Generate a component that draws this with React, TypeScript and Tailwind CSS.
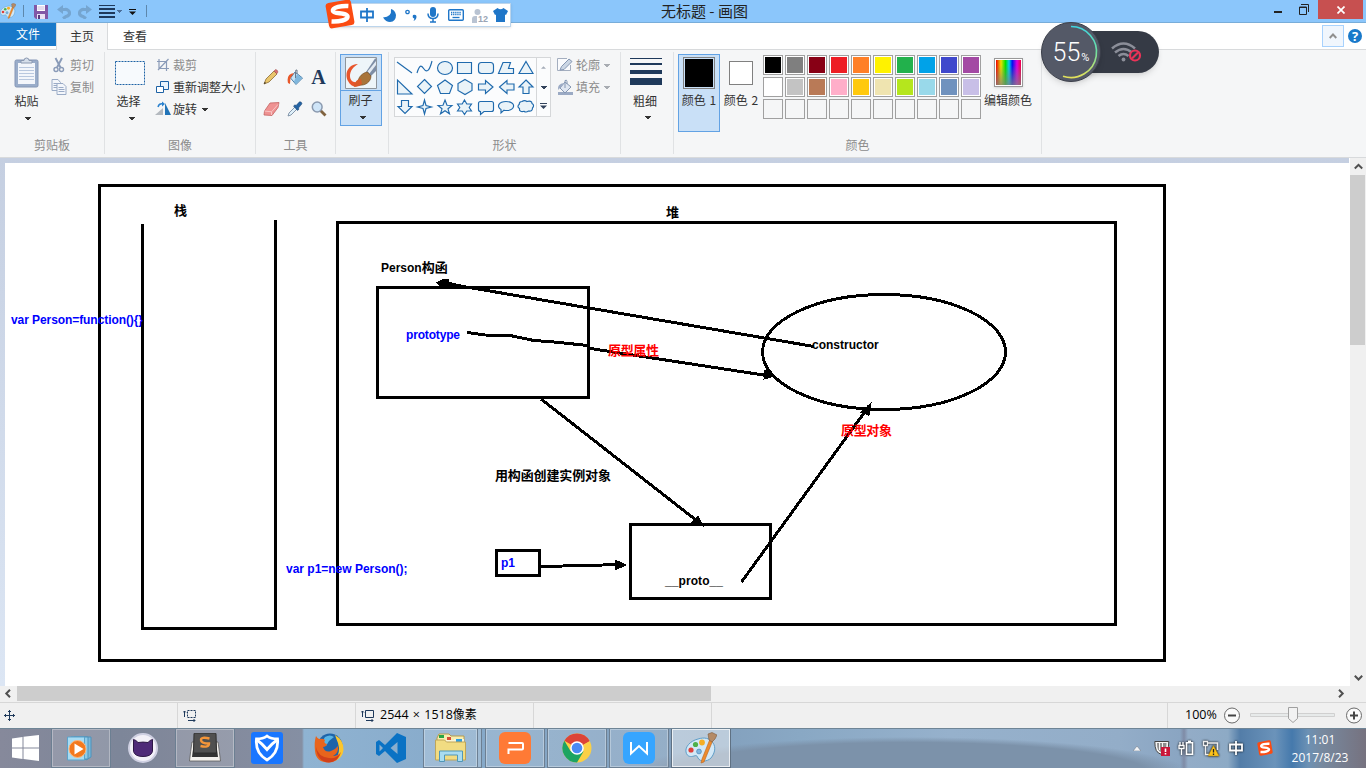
import React from "react";

type Kids = { children?: React.ReactNode; className?: string };

const INK = "#1f6aad";
const NAVY = "#1e395b";

function Caret({ className = "text-black", w = 6 }: { className?: string; w?: number }) {
  return (
    <svg width={w} height="3" viewBox="0 0 6 3" className={"shrink-0 " + className}>
      <path d="M0 0h6v1H5v1H4v1H2V2H1V1H0z" fill="currentColor" shapeRendering="crispEdges" />
    </svg>
  );
}

function Group({ children, label = "", className = "" }: Kids & { label?: string }) {
  return (
    <div className={"flex h-[107px] shrink-0 flex-col " + className}>
      <div className="flex h-[107px]">
        <div className="flex min-w-0 grow flex-col">
          <div className="flex h-[87px] items-start">{children}</div>
          <div className="h-4 text-center leading-4 text-[#8c8c8c]">{label}</div>
        </div>
        <div className="mt-[2px] h-[102px] w-px bg-[#e0e2e4]" />
      </div>
    </div>
  );
}

function Row({ children, className = "" }: Kids) {
  return <div className={"flex h-[22px] items-center gap-[2px] whitespace-nowrap " + className}>{children}</div>;
}

function PaintIcon({ size }: { size: number }) {
  return (
    <svg width={size} height={size} viewBox="0 0 32 32">
      <path d="M13 7C5 9 0 15 1 20c1 5 5 5 8 4 3-1 3 0 4 2 2 4 9 4 13 0 4-5 5-11 2-15-3-5-9-6-15-4z" fill="#d3e8f6" stroke="#5f9ec8" strokeWidth="1" />
      <circle cx="6" cy="18" r="2.600" fill="#e0403a" />
      <circle cx="10.500" cy="12.500" r="2.600" fill="#4fb04a" />
      <circle cx="17" cy="10.500" r="2.900" fill="#f5ae24" />
      <circle cx="14" cy="19.500" r="2.400" fill="#7fb5df" stroke="#4b87b8" strokeWidth=".7" />
      <path d="M25 7l3 1-9 22-3 1 1-4z" fill="#ee8b2c" stroke="#b8651e" strokeWidth=".6" />
      <path d="M23 2l4-1.500L32 3l-2 4-3 3-3-2z" fill="#b48a66" stroke="#7d5a3c" strokeWidth=".6" />
    </svg>
  );
}

function TitleBar() {
  return (
    <header className="flex h-[23px] items-start border-b border-[#78add9] bg-[#8bc6fb]">
      <div className="flex h-[22px] w-[655px] items-center">
        <div className="w-[16px]"><PaintIcon size={16} /></div>
        <div className="ml-[7px] h-3 w-px bg-[#5d87ac]" />
        <svg className="ml-[10px] mt-[2px]" width="14" height="14" viewBox="0 0 14 14">
          <path d="M0 0h14v14H2l-2-2z" fill="#8157a6" />
          <path d="M3 0h8v6H3z" fill="#fff" /><path d="M3.500 2h7M3.500 4h7" stroke="#c9b8dc" />
          <path d="M3 9h8v5H3z" fill="#e9e0f2" /><path d="M4 10h2v4H4z" fill="#5a3a80" />
        </svg>
        <svg className="ml-[9px] mt-[2px]" width="14" height="14" viewBox="0 0 14 14" fill="none" stroke="#75a5d0">
          <path d="M3 4.500h5a4 3.500 0 0 1 1 7l-3 2" strokeWidth="3.200" /><path d="M0 4.500l6-4.500v9z" fill="#75a5d0" stroke="none" />
        </svg>
        <svg className="ml-[7px] mt-[2px]" width="14" height="14" viewBox="0 0 14 14" fill="none" stroke="#75a5d0">
          <path d="M11 4.500H6a4 3.500 0 0 0-1 7l3 2" strokeWidth="3.200" /><path d="M14 4.500L8 0v9z" fill="#75a5d0" stroke="none" />
        </svg>
        <svg className="ml-[7px]" width="16" height="13" viewBox="0 0 16 13" fill={NAVY}>
          <path d="M0 0h16v1H0zM0 3h16v2H0zM0 7h16v2H0zM0 11h16v2H0z" />
        </svg>
        <Caret className="ml-[2px] text-[#4b6f9a]" w={5} />
        <svg className="ml-[7px] mt-[2px]" width="7" height="6" viewBox="0 0 7 6"><path d="M0 0h7v1H0zM0 2.500h7L3.500 6z" fill="#111" /></svg>
        <div className="ml-[10px] h-3 w-px bg-[#5d87ac]" />
      </div>
      <div className="w-[102px] pl-[6px] text-[15px] leading-[22px] whitespace-nowrap text-[#222]">无标题&nbsp;- 画图</div>
      <div className="ml-auto flex h-[19px] w-[44px]">
        <div className="flex w-[25px] items-end pb-[6px]"><div className="h-[2px] w-2 bg-[#222]" /></div>
        <svg className="mt-1 h-[11px] w-[10px]" viewBox="0 0 10 11" fill="none" stroke="#222"><path d="M2 .5h7.500V8" /><path d="M.5 3h7v7.500h-7z" /><path d="M0 3.500h8" /></svg>
      </div>
      <div className="mr-[3px] flex h-[19px] w-[45px] items-center justify-center bg-[#c75050]">
        <svg width="8" height="8" viewBox="0 0 8 8"><path d="M.5.5l7 7M7.500.5l-7 7" stroke="#fff" strokeWidth="1.700" /></svg>
      </div>
    </header>
  );
}

function TabBar() {
  return (
    <nav className="flex h-[27px] bg-white text-[#333]">
      <div className="w-14 border-b border-[#d8dadc]">
        <div className="h-[23px] bg-[#1979ca] text-center leading-[22px] text-white">文件</div>
      </div>
      <div className="w-[52px] border-x border-[#d8dadc] bg-[#f5f6f7] text-center leading-[26px]">主页</div>
      <div className="flex grow items-start border-b border-[#d8dadc] pl-[15px]">
        <span className="leading-[26px]">查看</span>
        <div className="mt-[2px] mr-[4px] ml-auto flex h-[22px] w-[22px] items-center justify-center border border-[#a8d2fd] bg-[#f0f6fd]">
          <svg width="8" height="6" viewBox="0 0 8 6"><path d="M.7 5L4 1.500 7.300 5" fill="none" stroke="#8f8f8f" strokeWidth="1.900" /></svg>
        </div>
        <div className="mt-[6px] mr-[4px] flex h-[14px] w-[14px] items-center justify-center rounded-full bg-[#1979ca] font-['Open_Sans',sans-serif] text-[13px] leading-[14px] font-bold text-white">?</div>
      </div>
    </nav>
  );
}

const shapes: React.ReactNode[] = [
  <path d="M3 4l15 11" />,
  <path d="M3 15c3-10 5-7 7-4s5 4 8-8" />,
  <ellipse cx="11" cy="10" rx="7.500" ry="6.500" />,
  <path d="M3.500 4.500h14v11h-14z" />,
  <rect x="3.500" y="4.500" width="15" height="11" rx="3" />,
  <path d="M8 4.500h7.500l-2 6h5v5H3.500z" />,
  <path d="M11 3.500l7 12H4z" />,
  <path d="M3.500 3v14H18z" />,
  <path d="M10.500 2.500l7 7-7 7-7-7z" />,
  <path d="M11 3l7.500 5.500-3 8h-9l-3-8z" />,
  <path d="M11 2.500l7 4v7l-7 4-7-4v-7z" />,
  <path d="M3.500 7h7V3.500l7.500 6.500-7.500 6.500V13h-7z" />,
  <path d="M19 7h-7V3.500L4.500 10l7.500 6.500V13h7z" />,
  <path d="M11 3l7 7h-4v6.500H8V10H4z" />,
  <path d="M7.500 3.500h7v6H18l-7 7-7-7h3.500z" />,
  <path d="M10.500 3l1.500 5.500 5.500 1.500-5.500 1.500-1.500 5.500L9 11.500 3.500 10 9 8.500z" />,
  <path d="M11 3l2 5.200 5 .2-4 3.400 1.500 5-4.500-3-4.500 3 1.500-5-4-3.400 5-.2z" />,
  <path d="M10.500 3l2.300 4h4.700l-2.300 3.500 2.300 3.500h-4.700l-2.300 3.500L8.200 14H3.500l2.300-3.500L3.500 7h4.700z" />,
  <path d="M5.500 4.500h11q2 0 2 2v6q0 2-2 2H9l-3.500 3v-3q-2 0-2-2v-6q0-2 2-2z" />,
  <path d="M11 4.500c11 0 9 9 1 9-1 0-2 0-3-.3L6 16v-3.500C1 9.500 4 4.500 11 4.500z" />,
  <path d="M7 4.500c2-1.500 3-1.500 5 0 3-1 5 0 5 2 2 1 2 3 .5 4.500 0 3-2 3.500-4 3-2 1.500-3 1.500-4.500.3-3 1-5-.5-4.500-2.800-2-1-2-3-.2-4.200-.3-1.800 1-2.800 2.700-2.800z" />,
];

function ShapeGallery() {
  return (
    <div className="mt-[7px] ml-[5px] flex h-[60px] w-[157px] border border-[#d5d7d9] bg-[#fbfcfd]">
      <div className="grid w-[141px] grid-cols-7 grid-rows-3">
        {shapes.map((s, i) => (
          <svg key={i} viewBox="1 0 20 20" className="h-[20px] w-[20px]" fill="#eaf3f8" stroke={INK} strokeWidth="1.15">
            {i < 2 ? <g fill="none">{s}</g> : s}
          </svg>
        ))}
      </div>
      <div className="flex grow flex-col items-center border-l border-[#d5d7d9]">
        <svg className="mt-2" width="5" height="3" viewBox="0 0 6 3"><path d="M0 3h6L3 0z" fill="#a5adb8" /></svg>
        <Caret className="mt-[17px] text-[#33435c]" />
        <svg className="mt-[14px]" width="7" height="6" viewBox="0 0 7 6"><path d="M0 0h7v1H0zM0 2.500h7L3.500 6z" fill="#33435c" /></svg>
      </div>
    </div>
  );
}

const palette: string[] = [
  "#000000", "#7f7f7f", "#880015", "#ed1c24", "#ff7f27", "#fff200", "#22b14c", "#00a2e8", "#3f48cc", "#a349a4",
  "#ffffff", "#c3c3c3", "#b97a57", "#ffaec9", "#ffc90e", "#efe4b0", "#b5e61d", "#99d9ea", "#7092be", "#c8bfe7",
];

function Ribbon() {
  return (
    <section className="flex h-[108px] border-b border-[#d8dadc] bg-[#f5f6f7] text-[#333]">
      <Group label="剪贴板" className="w-[105px]">
        <div className="flex w-[50px] shrink-0 flex-col items-center pt-[7px] pl-[3px]">
          <svg width="25" height="31" viewBox="0 0 25 31">
            <rect x="1" y="3" width="23" height="27" rx="1.500" fill="#9aadca" stroke="#8496b6" />
            <path d="M4 6h17v21H4z" fill="#f3f6fb" />
            <path d="M5 10.500h15M5 13.500h15M5 16.500h15M5 19.500h15M5 22.500h15" stroke="#b9c8df" />
            <path d="M7 6V3.500h3a2.500 2.500 0 0 1 5 0h3V6z" fill="#d5deea" stroke="#8a98b0" />
          </svg>
          <span className="mt-[5px] leading-4">粘贴</span>
          <Caret className="mt-[8px] ml-[3px]" />
        </div>
        <div className="pt-1 text-[#8c8c8c]">
          <Row>
            <svg width="18" height="16" viewBox="0 0 17 16" fill="none" stroke="#8a9bb8" strokeWidth="1.400">
              <path d="M5 1l5 9.500M11.500 1L6.500 10.500" strokeWidth="1.900" /><circle cx="5.500" cy="12.500" r="2" /><circle cx="11" cy="12.500" r="2" />
            </svg>
            <span>剪切</span>
          </Row>
          <Row>
            <svg width="18" height="16" viewBox="0 0 17 16" fill="#f3f6fb" stroke="#9aabc6">
              <path d="M1.500.5h6l2.500 3v8H1.500z" /><path d="M3 4.500h4M3 6.500h4M3 8.500h4" />
              <path d="M6.500 4.500h6l3 3v8h-9z" /><path d="M8 8.500h5M8 10.500h6M8 12.500h6" />
            </svg>
            <span>复制</span>
          </Row>
        </div>
      </Group>

      <Group label="图像" className="w-[151px]">
        <div className="flex w-[50px] shrink-0 flex-col items-center pt-[11px]">
          <svg width="30" height="24" viewBox="0 0 30 24"><path d="M.5.5h29v23H.5z" fill="#f7fafd" stroke="#1d62a5" strokeDasharray="2 1" /></svg>
          <span className="mt-[8px] -mr-px -ml-[4px] leading-4">选择</span>
          <Caret className="mt-[8px] ml-[3px]" />
        </div>
        <div className="pt-1">
          <Row className="text-[#8c8c8c]">
            <svg width="16" height="16" viewBox="0 0 16 16" fill="none" stroke="#8a9bb8" strokeWidth="1.200"><path d="M4 2v9.500h10M2 4.500h9.500V14M3 13L13.500 2" /></svg>
            <span>裁剪</span>
          </Row>
          <Row>
            <svg width="16" height="16" viewBox="0 0 16 16" fill="#eaf4fc" stroke="#1d62a5"><path d="M5.500 2.500h8v8h-8z" /><path d="M1.500 7.500h7v6h-7z" fill="#fff" /></svg>
            <span>重新调整大小</span>
          </Row>
          <Row>
            <svg width="16" height="16" viewBox="0 0 16 16"><path d="M0 14h8V7z" fill="#b4b9bf" /><path d="M10 2v12h6z" fill="#2274b8" /><path d="M3 6q1-4 5-3" fill="none" stroke="#2b82cf" strokeWidth="1.500" /><path d="M7 .5l3 2.500-3 2.500z" fill="#2b82cf" /></svg>
            <span>旋转</span>
            <Caret className="ml-[3px]" />
          </Row>
        </div>
      </Group>

      <Group label="工具" className="w-[80px]">
        <div className="mt-[11px] ml-[3px] grid grid-cols-[24px_24px_23px] grid-rows-[32px_32px] place-items-center">
          <svg width="16" height="16" viewBox="0 0 16 16"><path d="M1 15l2-5 8-8 3 3-8 8z" fill="#e9c56b" stroke="#8c6c33" strokeWidth=".8" /><path d="M11 2l1.500-1.500q2 0 2.500 2.500l-1.200 1.800z" fill="#d87070" stroke="#a04a4a" strokeWidth=".5" /><path d="M1 15l.8-2 1.200 1z" fill="#222" /></svg>
          <svg width="17" height="17" viewBox="0 0 17 17"><path d="M8 3l7.500 6-6.500 6.500L3.500 9z" fill="#c7e3f5" stroke="#4a7ea8" /><path d="M10 5l5 4-6 6-2-2.500z" fill="#7fb7dd" /><path d="M8.500 9V2.500Q8.500.5 10 1v4" fill="none" stroke="#68788a" /><path d="M1 14Q-1 5 7 4L3.500 9 3 15z" fill="#e8582a" /></svg>
          <div className="font-['Liberation_Serif',serif] text-[20px] leading-4 font-bold text-[#1e395b]">A</div>
          <svg width="17" height="16" viewBox="0 0 17 16"><path d="M7 2l9-.5-1 5-6 8-8-.5.500-4z" fill="#ef9292" stroke="#c46363" strokeWidth=".8" /><path d="M1.500 10l7 .8 6.500-7.300M8.500 10.800V14" stroke="#f9c4c4" fill="none" /></svg>
          <svg width="16" height="16" viewBox="0 0 16 16"><path d="M1 15l1-3 6-6 2 2-6 6z" fill="#dff0fa" stroke="#6d8299" strokeWidth=".8" /><path d="M6.500 5L8 3.800l1 .7L12.500.8q2-.5 2.500 2L11.500 7l.5 1.200L10.500 9.500z" fill="#2464a4" stroke="#173e6c" strokeWidth=".5" /></svg>
          <svg width="16" height="16" viewBox="0 0 16 16"><path d="M9.500 9.500l5 5" stroke="#80623f" strokeWidth="2.800" /><circle cx="6.200" cy="6" r="4.900" fill="#cfe5f8" stroke="#8b9aaf" strokeWidth="1.500" /></svg>
        </div>
      </Group>

      <Group className="w-[53px]">
        <div className="mt-1 ml-1 flex h-[72px] w-[42px] flex-col items-center border border-[#62a2e4] bg-[#c9e0f7]">
          <svg className="mt-[2px]" width="32" height="32" viewBox="0 0 32 32">
            <path d="M.5.5h31v31H.5z" fill="#eef5f9" stroke="#8e959c" />
            <path d="M13 7C3 7-1 17 3 24c3 6 8 7 13 4l-4-3c-4 1-7-2-7-6 0-5 3-9 8-12z" fill="#e8552b" />
            <path d="M21 15L30 1.500h1V14l-6 6z" fill="#7e8ea6" /><path d="M22.500 14.500L31 4v4l-6.500 8.500z" fill="#e3eaf2" />
            <path d="M13 25c0-5 5-9.500 9.500-10l3.500 4c0 6-6 10-12 9z" fill="#a8743a" stroke="#6f4a22" strokeWidth=".6" />
            <path d="M9 30q1-8 7-8l1 5q-3 2-8 3z" fill="#d95a28" />
          </svg>
          <div className="mt-px h-px w-[40px] bg-[#62a2e4]" />
          <span className="mt-[1px] -ml-px leading-4">刷子</span>
          <Caret className="mt-[8px] ml-[3px]" />
        </div>
      </Group>

      <Group label="形状" className="w-[232px]">
        <ShapeGallery />
        <div className="ml-[6px] pt-1 text-[#8c8c8c]">
          <Row>
            <svg width="17" height="16" viewBox="0 0 17 16" fill="#fafbfd" stroke="#a4aebf"><path d="M13.500 8v5.500h-13v-12H10" /><path d="M3 13l1.500-3.500L12 2l3 2.500-8 8z" fill="#cbd6e4" stroke="#8496b2" /></svg>
            <span>轮廓</span><Caret className="ml-[2px] text-[#a8acb2]" />
          </Row>
          <Row>
            <svg width="17" height="16" viewBox="0 0 17 16"><path d="M1 13h15v3H1z" fill="#9baac4" /><path d="M8 3l6 5-6 6-5-5z" fill="#dfe6f1" stroke="#8496b2" /><path d="M8 9V1.500q2-1 2 1V5" fill="none" stroke="#8496b2" /><path d="M1 11q-1-6 6-7l-4 5z" fill="#9baac4" /></svg>
            <span>填充</span><Caret className="ml-[2px] text-[#a8acb2]" />
          </Row>
        </div>
      </Group>

      <Group className="w-[53px]">
        <div className="flex w-[50px] flex-col items-center pt-[8px]">
          <svg width="32" height="27" viewBox="0 0 32 27" fill={NAVY}><path d="M0 0h32v1H0zM0 5h32v2H0zM0 12h32v4H0zM0 20h32v7H0z" /></svg>
          <span className="mt-[8px] -ml-[2px] leading-4">粗细</span>
          <Caret className="mt-[7px] ml-[3px]" />
        </div>
      </Group>

      <Group label="颜色" className="w-[368px]">
        <div className="mt-1 ml-1 flex h-[78px] w-[42px] shrink-0 flex-col items-center border border-[#62a2e4] bg-[#c9e0f7] pt-[2px]">
          <div className="h-8 w-8 border border-[#808080] bg-black outline-1 -outline-offset-2 outline-[#c9e0f7]" />
          <span className="mt-[3px] leading-4 whitespace-nowrap [word-spacing:1px]">颜色 1</span>
        </div>
        <div className="flex w-[42px] shrink-0 flex-col items-center pt-[11px]">
          <div className="h-6 w-6 border border-[#808080] bg-white" />
          <span className="mt-[7px] leading-4 whitespace-nowrap [word-spacing:1px]">颜色 2</span>
        </div>
        <div className="mt-[5px] ml-[1px] grid grid-cols-10 gap-[2px]">
          {Array.from({ length: 30 }, (_, i) => (
            <div key={i} className={"h-5 w-5 border border-[#a0a0a0] " + (i < 20 ? "bg-white p-px" : "")}>
              {i < 20 && <div className="h-4 w-4" style={{ background: palette[i] }} />}
            </div>
          ))}
        </div>
        <div className="flex w-[54px] flex-col items-center pt-[8px]">
          <div className="h-[29px] w-[29px] border border-[#999] bg-white p-px shadow-sm">
            <div className="h-full w-full bg-[linear-gradient(to_bottom,transparent_20%,#808080c0),linear-gradient(to_right,#f00000,#e8e000_20%,#00e000_38%,#00d0f0_52%,#0010f0_65%,#e000e0_84%,#f00040)]" />
          </div>
          <span className="mt-[5px] leading-4 whitespace-nowrap">编辑颜色</span>
        </div>
      </Group>
    </section>
  );
}

function Drawing() {
  return (
    <svg width="1344" height="523" viewBox="5 163 1344 523" fill="none" stroke="#000" strokeWidth="3" className="block bg-white font-['Liberation_Sans','Noto_Sans_CJK_SC',sans-serif] text-[12px] font-bold">
      <g stroke="none" fill="#000">
        <text x="174" y="215" fontSize="13">栈</text>
        <text x="666" y="217" fontSize="13">堆</text>
        <text x="381" y="272">Person<tspan fontSize="13">构函</tspan></text>
        <text x="812" y="349">constructor</text>
        <text x="495" y="480" fontSize="13" textLength="116">用构函创建实例对象</text>
        <text x="665" y="585" textLength="58">__proto__</text>
      </g>
      <g shapeRendering="crispEdges">
        <path d="M99.500 185.500h1065v475h-1065z" />
        <path d="M142.500 224v404.500h133V220" />
        <path d="M337.500 222.500h778v402h-778z" />
        <path d="M377.500 287.500h211v110h-211z" />
        <path d="M496.500 550.500h43v25h-43z" />
        <path d="M630.500 524.500h140v74h-140z" />
        <ellipse cx="884" cy="352" rx="121.500" ry="57.500" />
        <path d="M814 346.500L478 289l-35-6" />
        <path d="M467 332.500l18 2.500 25 .5 24 5 20 1.500 34 3.500" />
        <path d="M587 348L770 376" />
        <path d="M541 399L701 524" />
        <path d="M741.500 582L869 406" />
        <path d="M541 566.500l22-.5 60-1.500" />
        <g fill="#000" strokeWidth="1">
          <path d="M437 282.500l7-3.500h5l-1 3 16 4-8 1.500h-14z" />
          <path d="M775 376l-10-6-1 9z" />
          <path d="M703 526l-5-10-2 2-6 6z" />
          <path d="M871 403.500l-10 9 4 1 4 2z" />
          <path d="M626 565l-11-5v10z" />
        </g>
      </g>
      <g stroke="none" fill="#0000ff">
        <text x="11" y="324" textLength="132">var Person=function(){"{}"}</text>
        <text x="286" y="573" textLength="121.500">var p1=new Person();</text>
        <text x="406" y="339" textLength="54">prototype</text>
        <text x="501" y="567">p1</text>
      </g>
      <g stroke="none" fill="#ff0000" fontSize="13">
        <text x="608" y="355" textLength="51">原型属性</text>
        <text x="841" y="435" textLength="51">原型对象</text>
      </g>
    </svg>
  );
}

function Chevron({ d }: { d: string }) {
  return (
    <svg width="9" height="9" viewBox="0 0 9 9"><path d={d} fill="none" stroke="#505050" strokeWidth="2" /></svg>
  );
}

function Workspace() {
  return (
    <main className="flex h-[544px]">
      <div className="w-[1350px]">
        <div className="mr-px h-[528px] bg-[linear-gradient(to_bottom,#c5cfe1,#dce6f4)] pt-[5px] pl-[5px]"><Drawing /></div>
        <div className="flex h-4 bg-[#f0f0f0] pb-px">
          <div className="flex w-[17px] items-center justify-center"><Chevron d="M6 .8L2.300 4.500 6 8.200" /></div>
          <div className="w-[694px] bg-[#cdcdcd]" />
          <div className="ml-auto flex w-[19px] items-center justify-center"><Chevron d="M3 .8l3.700 3.700L3 8.200" /></div>
        </div>
      </div>
      <div className="flex w-4 flex-col items-center bg-[#f0f0f0]">
        <div className="flex h-[17px] items-center"><Chevron d="M.8 6.500L4.500 2.800l3.700 3.700" /></div>
        <div className="mr-px h-[170px] w-[15px] bg-[#cdcdcd]" />
        <div className="mt-auto mb-[16px] flex h-[17px] items-center"><Chevron d="M.8 2.800l3.700 3.700 3.700-3.700" /></div>
      </div>
    </main>
  );
}

function StatusBar() {
  return (
    <footer className="flex h-[26px] border-t border-[#d7d7d7] bg-[#f0f0f0] font-['Open_Sans','Noto_Sans_CJK_SC',sans-serif] text-[12.500px] text-black">
      <div className="flex w-[178px] items-center border-r border-[#d7d7d7] pl-[4px]">
        <svg width="11" height="11" viewBox="0 0 11 11" fill="none" stroke={NAVY}><path d="M5.500 0v11M0 5.500h11M4 2l1.500-1.500L7 2M4 9l1.500 1.500L7 9M2 4L.5 5.500 2 7M9 4l1.500 1.500L9 7" /></svg>
      </div>
      <div className="flex w-[178px] items-center border-r border-[#d7d7d7] pl-[5px]">
        <svg width="13" height="12" viewBox="0 0 13 12" fill="none" stroke={NAVY}><path d="M4.500.5h8v7h-8z" strokeDasharray="2 1" /><path d="M1.500 7V1M0 2.500L1.500 1 3 2.500M5 10.500h7M10.500 9l1.500 1.500-1.500 1.500" /></svg>
      </div>
      <div className="flex w-[178px] items-center border-r border-[#d7d7d7] pl-[5px]">
        <svg width="13" height="12" viewBox="0 0 13 12" fill="none" stroke={NAVY}><path d="M4.500.5h8v7h-8z" /><path d="M1.500 7V1M0 2.500L1.500 1 3 2.500M5 10.500h7M10.500 9l1.500 1.500-1.500 1.500" /></svg>
        <span className="ml-[6px] whitespace-nowrap [word-spacing:1px]">2544 × 1518<span className="text-[12px]">像素</span></span>
      </div>
      <div className="w-[178px] border-r border-[#d7d7d7]" />
      <div className="w-[456px] border-r border-[#d7d7d7]" />
      <div className="flex grow items-center pl-[17px]">
        <span className="w-[39px] whitespace-nowrap">100%</span>
        <svg width="17" height="17" viewBox="0 0 17 17"><circle cx="8" cy="8.500" r="7.500" fill="#fafafa" stroke="#6b6b6b" /><path d="M4 8.500h8" stroke="#444" strokeWidth="2" /></svg>
        <svg className="ml-[9px]" width="86" height="18" viewBox="0 0 86 18"><path d="M.5 6.500h84v3H.5z" fill="#e7eaea" stroke="#d0d0d0" /><path d="M38.500.5h9v11l-4.500 4-4.500-4z" fill="#f2f2f2" stroke="#a0a0a0" /></svg>
        <svg className="ml-[10px]" width="17" height="17" viewBox="0 0 17 17"><circle cx="8" cy="8.500" r="7.500" fill="#fafafa" stroke="#6b6b6b" /><path d="M4 8.500h8M8 4.500v8" stroke="#444" strokeWidth="2" /></svg>
      </div>
    </footer>
  );
}

function Slot({ children, mode = "none" }: { children: React.ReactNode; mode?: "none" | "open" | "active" }) {
  const look =
    mode === "open"
      ? "border border-[#6c7f92] bg-white/15 shadow-[inset_0_0_0_1px_rgba(255,255,255,0.3)]"
      : mode === "active"
        ? "border border-[#5f7183] bg-white/45 shadow-[inset_0_0_0_1px_rgba(255,255,255,0.7)]"
        : "";
  return (
    <div className="flex h-10 w-[62px] shrink-0 items-center justify-center">
      <div className={"flex h-10 w-[60px] items-center justify-center " + look}>{children}</div>
    </div>
  );
}

function Sogou({ className = "h-4 w-4" }: { className?: string }) {
  return (
    <svg viewBox="0 0 28 28" className={className}>
      <g transform="rotate(-10 14 14)">
        <rect x="2" y="2" width="24" height="24" rx="3" fill="#fb4b12" />
        <path d="M23 8C17 6.500 8 6.500 8 10c0 3.500 12.500 3 12.500 7.500 0 3.500-9 3.500-15.500 2" fill="none" stroke="#fff" strokeWidth="4.200" />
      </g>
    </svg>
  );
}

function Taskbar() {
  return (
    <footer className="flex h-10 overflow-hidden border-t border-[#6f8596] bg-[radial-gradient(ellipse_280px_36px_at_910px_44px,#7c92aa_85%,transparent_100%),linear-gradient(to_right,#86899b_0px,#7d8699_120px,#83899b_200px,#858fa3_302px,#8fb3d2_304px,#86a9c9_480px,#829fbc_700px,#89a8c4_800px,#96b1cc_950px,#93adc8_1120px,#8aa5c2_1180px,#7f8ba6_1184px,#93acc7_1188px,#8daac5_1228px,#537da8_1240px,#6b93ba_1275px,#4579ac_1292px,#6c91b4_1308px,#77899f_1322px,#76727f_1366px)]">
      <div className="-mt-px flex h-10 grow">
        <div className="flex w-[50px] items-center justify-center">
          <svg width="27" height="26" viewBox="0 0 27 26" fill="#fff"><path d="M0 3.500L10.500 2v10.500H0zM11.500 1.800L27 0v12.500H11.500zM0 13.500h10.500V24L0 22.500zM11.500 13.500H27V26l-15.500-2z" /></svg>
        </div>
        <Slot mode="open">
          <svg width="30" height="28" viewBox="0 0 30 28"><path d="M8 3h17v20l-5 3z" fill="#7bb7d8" stroke="#4d93bd" /><path d="M5 3h17v22H5z" fill="#8fcbe8" stroke="#4d93bd" /><path d="M1.500 3h17v23h-17z" fill="#a8dbf2" stroke="#5ba3cb" /><circle cx="11.500" cy="15" r="8.500" fill="#f3791e" stroke="#fbb57b" /><path d="M8.500 9.500v11l9-5.500z" fill="#fff" /></svg>
        </Slot>
        <Slot>
          <svg width="30" height="30" viewBox="0 0 30 30"><circle cx="15" cy="15" r="14" fill="#f3f1f8" stroke="#cfd0e2" strokeWidth="2" /><path d="M5.500 6.500q2.500.5 4.500 3 5-.8 10 0 2-2.500 4.500-3v12q-1.500 5-9.500 5t-9.500-5z" fill="#4f2a78" stroke="#2d1745" /></svg>
        </Slot>
        <Slot mode="open">
          <svg width="32" height="30" viewBox="0 0 32 30"><path d="M3 9q-1.500 10-2.500 19h31Q30.500 19 29 9z" fill="#f3f1ed" stroke="#5c5c5c" strokeWidth=".8" /><path d="M6 1h20l3 23H3z" fill="#333" /><path d="M5 1q0-1 1-1h20q1 0 1 1l.5 19h-23z" fill="#505050" stroke="#2e2e2e" /><path d="M20.500 5.500q-8.500-2-8.500 1.500t8 3.500q0 4.500-8.500 2.500" fill="none" stroke="#f5963a" strokeWidth="2.400" /></svg>
        </Slot>
        <Slot>
          <svg width="32" height="32" viewBox="0 0 32 32"><rect width="32" height="32" rx="3" fill="#1976ff" /><path d="M5.500 7Q12 7 16 4q4 3 10.500 3Q28 21 16 28 4 21 5.500 7z" fill="none" stroke="#fff" strokeWidth="2.800" /><path d="M6 8q5 3.500 10 9.500 5-6 10-9.500" fill="none" stroke="#fff" strokeWidth="2.800" /></svg>
        </Slot>
        <Slot>
          <svg width="32" height="32" viewBox="0 0 32 32"><circle cx="17" cy="14" r="12.500" fill="#1e64aa" /><path d="M12 5q5-3 9 0l-5 4-3 5-4-4z" fill="#58b4e5" /><path d="M22 3q9 5 8.500 15-1 8-8.500 11 6-9 3-18-2-5-3-8z" fill="#fbc62e" /><path d="M3 4q1 2 3 3 4-1 6 1-2 3 2 4-1 3-4 3 2 6 8 4 5-2 7-5 1 7-5 10 5 0 8-4-2 10-12 10.500Q3 30.500 2 19 1 10 3 4z" fill="#e8641c" /><path d="M3 15q2 10 13 11 7 1 11-4-3 8-11 8.500Q4 30 3 15z" fill="#d1401a" /></svg>
        </Slot>
        <Slot>
          <svg width="32" height="32" viewBox="0 0 32 32"><path d="M22 1l9 4v22l-9 4L10 19l-6 5-3-2V10l3-2 6 5zM22.500 10l-7 6 7 6zM4.500 12.500v7L8 16z" fill="#0a72c4" fillRule="evenodd" /></svg>
        </Slot>
        <div className="flex w-[62px] shrink-0 pl-px">
          <div className="flex h-10 w-[55px] items-center justify-center border border-[#6c7f92] bg-white/20 shadow-[inset_0_0_0_1px_rgba(255,255,255,0.3)]">
            <svg width="34" height="30" viewBox="0 0 34 30"><path d="M3 5l2-4h10l2 2h13v6H3z" fill="#f7edb0" stroke="#b69b4c" /><path d="M5 2h5v3H5z" fill="#28a645" /><path d="M13 4h4v3h-4z" fill="#d64b37" /><path d="M12 7h8v-1h10v4H12z" fill="#fbf6d8" /><path d="M22 6h6v3h-6z" fill="#2e9ee0" /><path d="M1.500 7h9l2 2h19v18h-30z" fill="#f1dc82" stroke="#bea559" /><path d="M5.500 28.500V18h23v10.500h-5V22h-13v6.500z" fill="#a9dcf0" stroke="#5197b8" /></svg>
          </div>
          <div className="h-10 w-[4px] border-y border-r border-[#6c7f92] bg-white/20" />
        </div>
        <Slot mode="open">
          <svg width="32" height="32" viewBox="0 0 32 32"><rect width="32" height="32" rx="6" fill="#ff7a35" /><path d="M9.500 11h13.500q1 0 1 1v4.500q0 1-1 1H9.500V22" fill="none" stroke="#fff" strokeWidth="2" /></svg>
        </Slot>
        <Slot mode="open">
          <svg width="30" height="30" viewBox="0 0 30 30"><circle cx="15" cy="15" r="14.500" fill="#fbd046" /><path d="M15 15L2.400 7.700A14.500 14.500 0 0 1 27.600 7.700z" fill="#dc4437" /><path d="M15 8h12.600L15 15z" fill="#dc4437" /><path d="M2.400 7.700A14.500 14.500 0 0 0 15 29.500l6.500-11L15 15 8.500 18z" fill="#1da462" /><circle cx="15" cy="15" r="6.800" fill="#fff" /><circle cx="15" cy="15" r="5.300" fill="#4a8af4" /></svg>
        </Slot>
        <Slot mode="open">
          <svg width="32" height="32" viewBox="0 0 32 32"><rect width="32" height="32" rx="6" fill="#36a5ff" /><path d="M8 10v11.500l8-7.500 8 7.500V10" fill="none" stroke="#fff" strokeWidth="2" /></svg>
        </Slot>
        <Slot mode="active"><PaintIcon size={32} /></Slot>
        <div className="ml-auto flex items-center">
          <svg width="8" height="5" viewBox="0 0 8 5"><path d="M0 5h8L4 0z" fill="#f2f4f7" stroke="#66717e" strokeWidth=".5" /></svg>
          <svg className="ml-[13px]" width="16" height="16" viewBox="0 0 16 16"><path d="M.8 1.500h14q0 6-1.500 9-2 3-5.500 4-4-1-5.500-4-1.500-3-1.500-9z" fill="#f4f4f4" stroke="#444" /><path d="M3 3h9.500q0 4-1 6.500-1 2-3.700 3-2.800-1-3.800-3Q3 7 3 3z" fill="#8d8d8d" /><path d="M5.500 3v7M8.500 3v8" stroke="#f4f4f4" /><path d="M7 7h9v9H7z" fill="#c9173a" /><path d="M11.500 8.500v3.500M11.500 13v1.500" stroke="#fff" strokeWidth="1.600" /></svg>
          <svg className="ml-[8px] overflow-visible drop-shadow-[0_0_1px_#000]" width="16" height="16" viewBox="0 0 16 16" fill="none" stroke="#fff"><path d="M8.500 2.800h6v11.500h-6zM10 1.300h3" strokeWidth="1.600" /><path d="M1 5.500h5v3H1zM2 2v3M5 2v3M3.500 9v6" strokeWidth="1.300" /></svg>
          <svg className="ml-[8px] overflow-visible drop-shadow-[0_0_1px_#000]" width="17" height="16" viewBox="0 0 17 16" fill="none" stroke="#eee"><path d="M6 3h9.500v7" strokeWidth="1.600" /><path d="M1.500 1.500h4v4h-4zM3.500 6v8.500H7" strokeWidth="1.300" /><path d="M11.500 5.500L17 16H6z" fill="#fcc21b" stroke="#a98214" strokeWidth=".5" /><path d="M11.500 9v3.500M11.500 13.500V15" stroke="#222" strokeWidth="1.300" /></svg>
          <svg className="ml-[10px] overflow-visible drop-shadow-[0_0_1px_#000]" width="14" height="16" viewBox="0 0 14 16" fill="none" stroke="#fff" strokeWidth="1.800"><path d="M1 4.500h12v6H1zM7 1v14" /></svg>
          <div className="ml-[14px]"><Sogou /></div>
          <div className="ml-[12px] w-[70px] text-center font-['Open_Sans',sans-serif] text-[12px] leading-[18px] whitespace-nowrap text-white">
            <div className="pt-px">11:01</div><div>2017/8/23</div>
          </div>
          <div className="w-[11px]" />
        </div>
      </div>
    </footer>
  );
}

function ImeBar() {
  return (
    <div className="absolute top-[3px] left-[330px] flex h-6 w-[181px] items-center border border-[#bcd5ec] bg-white pl-[29px] text-[#1f76c8] shadow-sm">
      <div className="absolute -top-[5px] -left-[6px]"><Sogou className="h-[30px] w-[30px]" /></div>
      <svg width="14" height="14" viewBox="0 0 14 14" fill="none" stroke="currentColor" strokeWidth="1.800"><path d="M1 3.500h12v6H1zM7 0v14" /></svg>
      <svg className="ml-[9px]" width="13" height="13" viewBox="0 0 13 13"><path d="M8 0q1 8-8 8.500Q3 13 7 13q6-.5 6-7-1-5-5-6z" fill="currentColor" /></svg>
      <svg className="ml-[9px]" width="12" height="12" viewBox="0 0 12 12"><circle cx="2.500" cy="3" r="1.700" fill="none" stroke="currentColor" strokeWidth="1.300" /><path d="M8 6q3.500-1 3.500 1.500 0 3-3 4.500 1-2 .8-2.500Q7 9 8 6z" fill="currentColor" /></svg>
      <svg className="ml-[10px]" width="12" height="16" viewBox="0 0 12 16"><rect x="3" width="6" height="10" rx="3" fill="currentColor" /><path d="M1 6.500q0 5 5 5t5-5M6 11v4M3 15h6" fill="none" stroke="currentColor" strokeWidth="1.500" /></svg>
      <svg className="ml-[9px]" width="16" height="12" viewBox="0 0 16 12"><rect x=".7" y=".7" width="14.600" height="10.600" rx="1" fill="none" stroke="currentColor" strokeWidth="1.400" /><path d="M3 3.500h10M3 5.500h10" stroke="currentColor" strokeDasharray="1.300 .8" strokeWidth="1.300" /><path d="M4.500 8.500h7" stroke="currentColor" strokeWidth="1.300" /></svg>
      <div className="ml-[8px] flex h-[15px] w-[16px] items-end text-[#b9c3d2]">
        <svg width="10" height="14" viewBox="0 0 10 14" className="shrink-0"><circle cx="5.500" cy="3" r="3" fill="currentColor" /><path d="M0 14V10q0-3 3-3h5l2 2v5z" fill="currentColor" /></svg>
        <span className="-ml-[5px] bg-white px-px font-['Liberation_Sans',sans-serif] text-[9px] leading-[7px] font-bold text-[#9aa5b5]">12</span>
      </div>
      <svg className="ml-[5px]" width="15" height="14" viewBox="0 0 15 14"><path d="M4.500 0q3 2.500 6 0L15 3l-2 4-1-.5V14H3V6.500L2 7 0 3z" fill="currentColor" /></svg>
    </div>
  );
}

function SpeedBall() {
  return (
    <div className="absolute top-[22px] left-[1041px] flex h-[60px] w-[118px] items-center">
      <div className="ml-[30px] flex h-[42px] w-[88px] items-center rounded-r-full bg-[#353a45] pl-[40px] shadow-md">
        <svg width="31" height="21" viewBox="0 0 31 21" fill="none" stroke="#8b8e99" strokeWidth="2.500">
          <path d="M1 6.500q11.500-10 23 0M4 10.500q8.500-7 17 0M7.500 14q5-4 10 0" /><circle cx="12.500" cy="17.500" r="1.900" fill="#8b8e99" stroke="none" />
          <circle cx="24" cy="13.500" r="5" fill="#353a45" stroke="#ea3358" strokeWidth="2.200" /><path d="M21 16.500l6-6" stroke="#ea3358" strokeWidth="2.200" />
        </svg>
      </div>
      <div className="absolute top-0 left-0 flex h-[60px] w-[60px] items-center justify-center rounded-full border border-[#3b3f4a] bg-[#545967] shadow-md">
        <svg className="absolute -top-px -left-px" width="60" height="60" viewBox="0 0 60 60" fill="none">
          <defs><linearGradient id="arc" x1="0" y1="0" x2="0" y2="1"><stop offset="0" stopColor="#3fd5e0" /><stop offset=".5" stopColor="#71e0a0" /><stop offset="1" stopColor="#e2e05a" /></linearGradient></defs>
          <path d="M30 4.500A25.500 25.500 0 1 1 22 54.200" stroke="url(#arc)" strokeWidth="1.600" />
        </svg>
        <span className="font-['Roboto',sans-serif] text-[25px] leading-none font-light text-white">55</span>
        <span className="mt-[10px] ml-px font-['Roboto',sans-serif] text-[11px] leading-none text-white">%</span>
      </div>
    </div>
  );
}

export default function App() {
  return (
    <div className="relative h-[768px] w-[1366px] overflow-hidden bg-white font-['Noto_Sans_CJK_SC',sans-serif] text-[12px]">
      <TitleBar />
      <TabBar />
      <Ribbon />
      <Workspace />
      <StatusBar />
      <Taskbar />
      <ImeBar />
      <SpeedBall />
    </div>
  );
}
